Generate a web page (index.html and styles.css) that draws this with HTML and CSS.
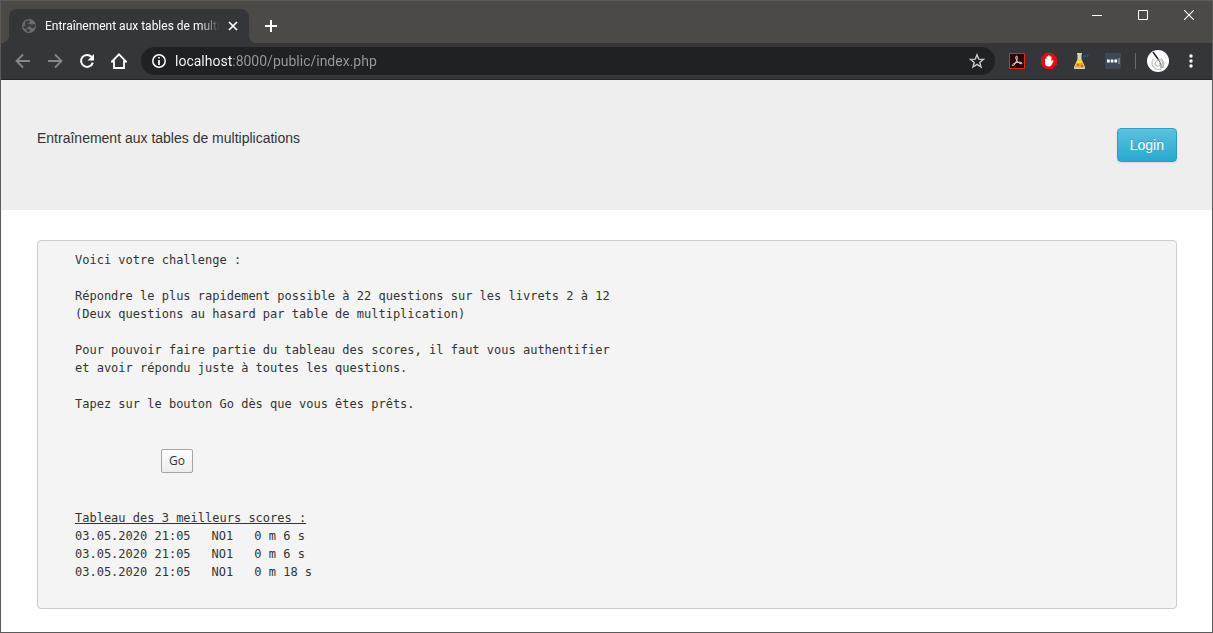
FILE: index.html
```html
<!DOCTYPE html>
<html lang="fr">
<head>
<meta charset="utf-8">
<title>Entraînement aux tables de multiplications</title>
<link rel="stylesheet" href="styles.css">
</head>
<body>
<div class="window">
  <div class="tabstrip">
    <div class="tab">
      <svg class="globe" viewBox="0 0 16 16" width="16" height="16"><circle cx="8" cy="8" r="7" fill="#6b6f73"/><path d="M4 3.500l4-1.500 1 2-2 1.500 2.500 1 4-.5 1 2-2 2.500-2-.5-1.500-1.500-2 .5-1 2-3-.5-1-2 2-1z" fill="#3b3d41"/><path d="M5 11.500l3-.5 1.500 1-1.500 2-2-.5z" fill="#3b3d41"/></svg>
      <span class="tab-title">Entraînement aux tables de multiplications</span>
      <button class="icon-button tab-close" aria-label="Fermer l'onglet"><svg viewBox="0 0 10 10" width="10" height="10"><path d="M1 1l8 8M9 1l-8 8" stroke="#fff" stroke-width="1.7"/></svg></button>
    </div>
    <button class="icon-button new-tab" aria-label="Nouvel onglet"><svg viewBox="0 0 12 12" width="12" height="12"><path d="M6 0v12M0 6h12" stroke="#fff" stroke-width="2"/></svg></button>
    <div class="window-controls">
      <button class="icon-button" aria-label="Réduire"><svg viewBox="0 0 10 10" width="10" height="10"><path d="M0 5.5h10" stroke="#fff"/></svg></button>
      <button class="icon-button" aria-label="Agrandir"><svg viewBox="0 0 10 10" width="10" height="10"><path d="M.5 .5h9v9h-9z" fill="none" stroke="#fff"/></svg></button>
      <button class="icon-button" aria-label="Fermer"><svg viewBox="0 0 10 10" width="10" height="10"><path d="M0 0l10 10M10 0L0 10" stroke="#fff" stroke-width="1.1"/></svg></button>
    </div>
  </div>
  <div class="toolbar">
    <div class="nav">
      <button class="icon-button" aria-label="Précédent"><svg viewBox="0 0 16 16" width="16" height="16"><path d="M15 8H2M8 1.5L1.500 8 8 14.500" fill="none" stroke="#85878a" stroke-width="1.800"/></svg></button>
      <button class="icon-button" aria-label="Suivant"><svg viewBox="0 0 16 16" width="16" height="16"><path d="M1 8h13M8 1.500L14.500 8 8 14.500" fill="none" stroke="#85878a" stroke-width="1.800"/></svg></button>
      <button class="icon-button" aria-label="Actualiser"><svg viewBox="0 0 16 16" width="16" height="16"><path d="M12.600 4A6 6 0 1 0 13.800 9.600" fill="none" stroke="#fff" stroke-width="2"/><path d="M15 1v6.500H8.500z" fill="#fff"/></svg></button>
      <button class="icon-button" aria-label="Accueil"><svg viewBox="0 0 16 16" width="16" height="16"><path d="M1 8.500L8 1.300l7 7.200h-2V15H3V8.500z" fill="none" stroke="#fff" stroke-width="1.800"/></svg></button>
    </div>
    <div class="omnibox">
      <svg viewBox="0 0 14 14" width="14" height="14"><circle cx="7" cy="7" r="6.200" fill="none" stroke="#fff" stroke-width="1.500"/><path d="M7 3v1.600M7 6v5" stroke="#fff" stroke-width="1.700"/></svg>
      <input class="address" type="text" aria-label="Adresse" value="localhost:8000/public/index.php">
      <button class="icon-button" aria-label="Favori"><svg viewBox="0 0 16 16" width="16" height="16"><path d="M8 1.800l1.700 4.300 4.700.3-3.600 3 1.200 4.600-4-2.600-4 2.600 1.200-4.600-3.600-3 4.700-.3z" fill="none" stroke="#c8cacc" stroke-width="1.400"/></svg></button>
    </div>
    <div class="extensions">
      <button class="icon-button" aria-label="PDF"><svg viewBox="0 0 16 16" width="16" height="16"><path d="M.5 .5h15v15H.5z" fill="#2a0808" stroke="#e22b10"/><path d="M7.200 3.200c1.500-.8 1.300 2.200.4 4.500-.8 2-2.800 5.300-4 5-1.300-.5 1.300-2.700 4.400-3.300 3-.6 5.500.2 4.900 1.100-.7.900-3-.4-4.300-1.900C7 6.900 6.200 4 7.200 3.200z" fill="none" stroke="#e9dede" stroke-width="1"/></svg></button>
      <button class="icon-button" aria-label="Bloqueur"><svg viewBox="0 0 16 16" width="16" height="16"><path d="M4.700 0h6.600L16 4.700v6.600L11.300 16H4.700L0 11.300V4.700z" fill="#e60c10"/><path d="M4 6q.7-1 1.500 0V3.800q.8-1 1.600 0V2.800q.9-1 1.700 0v1q.9-.9 1.700 0V8.500l1-1.200q1.200-.2 1 .8l-2 3.900q-.8 1.500-2.600 1.500Q4 13.500 4 10z" fill="#fff"/></svg></button>
      <button class="icon-button" aria-label="Laboratoire"><svg viewBox="0 0 16 16" width="16" height="16"><path d="M4 0h5v1.500H8.500V6l3.500 8v2H1v-2l3.500-8V1.500H4z" fill="#d6d2bd"/><path d="M5 6.500h3l3.500 8h-10z" fill="#f1a51b"/><path d="M5 6.500h3l1.500 3.500h-6z" fill="#f6dc22"/><path d="M4 11h2v2H4zM8 12h2v2H8z" fill="#c8692a"/><path d="M10 3l2-1.500 1 2-2 1.500zM13.500 1l2.500 1-2 3z" fill="#14617e"/></svg></button>
      <button class="icon-button" aria-label="Mots de passe"><svg viewBox="0 0 16 16" width="16" height="16"><rect width="16" height="16" rx="1" fill="#3b4a54"/><path d="M2 6.500h2.700v3H2zM5.700 6.500h2.700v3H5.700zM9.400 6.500h2.700v3H9.400z" fill="#fff"/><path d="M14 5v6" stroke="#a9b1b5"/></svg></button>
    </div>
    <span class="separator"></span>
    <button class="icon-button avatar" aria-label="Profil"><svg viewBox="0 0 22 22" width="22" height="22"><circle cx="11" cy="11" r="11" fill="#fff"/><path d="M6 2l5 7" stroke="#222" stroke-width="1.500"/><path d="M6 9c-2 4-1 8 3 10 3 1 7 0 7-3 0-4-2-7-5-6-3 1-4 5-1 6 3 1 4-2 2-3M14 8l3 5-1 5" fill="none" stroke="#999" stroke-width=".8"/><path d="M11 9l3 5v4" fill="none" stroke="#444" stroke-width=".8"/></svg></button>
    <button class="icon-button" aria-label="Menu"><svg viewBox="0 0 4 14" width="4" height="14"><g fill="#fff"><circle cx="2" cy="2" r="1.700"/><circle cx="2" cy="7" r="1.700"/><circle cx="2" cy="12" r="1.700"/></g></svg></button>
  </div>
  <div class="page">
    <header class="header">
      <span>Entraînement aux tables de multiplications</span>
      <button class="login">Login</button>
    </header>
    <main class="challenge">
      <p>Voici votre challenge :</p>
      <p>Répondre le plus rapidement possible à 22 questions sur les livrets 2 à 12<br>(Deux questions au hasard par table de multiplication)</p>
      <p>Pour pouvoir faire partie du tableau des scores, il faut vous authentifier<br>et avoir répondu juste à toutes les questions.</p>
      <p>Tapez sur le bouton Go dès que vous êtes prêts.</p>
      <button class="go">Go</button>
      <table class="scores">
        <caption>Tableau des 3 meilleurs scores :</caption>
        <tbody>
          <tr><td>03.05.2020 21:05</td><td>NO1</td><td>0 m 6 s</td></tr>
          <tr><td>03.05.2020 21:05</td><td>NO1</td><td>0 m 6 s</td></tr>
          <tr><td>03.05.2020 21:05</td><td>NO1</td><td>0 m 18 s</td></tr>
        </tbody>
      </table>
    </main>
  </div>
</div>
</body>
</html>
```
FILE: styles.css
```css
* { box-sizing: border-box; }
body { margin: 0; font-family: "Liberation Sans", Arial, sans-serif; color: #333; }
.window { min-height: 100vh; border: 1px solid #5a5a5a; background: #fff; }
.icon-button { display: flex; align-items: center; justify-content: center; flex: none; padding: 0; border: 0; background: none; }
svg { display: block; flex: none; }

.tabstrip { display: flex; align-items: flex-end; height: 42px; padding-left: 8px; background: #4b4a47; }
.tab { position: relative; display: flex; align-items: center; width: 240px; height: 34px; padding: 0 11px 0 12px; border-radius: 8px 8px 0 0; background: #35363a; }
.tab::before, .tab::after { content: ""; position: absolute; bottom: 0; width: 8px; height: 8px; }
.tab::before { right: 100%; background: radial-gradient(circle at 0 0, transparent 8px, #35363a 8px); }
.tab::after { left: 100%; background: radial-gradient(circle at 100% 0, transparent 8px, #35363a 8px); }
.tab-title { flex: 1; margin: 0 8px; overflow: hidden; white-space: nowrap; font: 12px/16px Roboto, "Open Sans", sans-serif; color: #fff; mask-image: linear-gradient(to right, #000 88%, transparent); }
.new-tab { width: 28px; height: 34px; margin-left: 8px; }
.window-controls { display: flex; align-self: flex-start; margin-left: auto; }
.window-controls .icon-button { width: 46px; height: 28px; }

.toolbar { display: flex; align-items: center; height: 37px; padding: 0 14px; border-bottom: 1px solid #252629; background: #35363a; }
.nav { display: flex; gap: 16px; }
.omnibox { display: flex; align-items: center; flex: 1; height: 28px; margin: 0 14px; padding: 0 10px 0 11px; border-radius: 14px; background: #202124; }
.address { flex: 1; min-width: 0; height: 28px; margin: 0 8px; padding: 0 1px; border: 0; outline: 0; background: linear-gradient(to right, #fff 58px, #999b9e 58px); background-clip: text; color: transparent; font: 14px/28px Roboto, "Open Sans", sans-serif; }
.extensions { display: flex; gap: 16px; }
.separator { width: 1px; height: 16px; margin: 0 11px 0 14px; background: #6a6b6e; }
.avatar { margin-right: 20px; }
.toolbar > .icon-button:last-child { margin-right: 5px; }

.header { display: flex; align-items: flex-start; justify-content: space-between; min-height: 130px; padding: 48px 35px 36px 36px; background: #eee; font-size: 14px; line-height: 20px; }
.login { padding: 6px 12px; border: 1px solid #2a9fc4; border-radius: 4px; background: linear-gradient(#5bc0de, #28a9d0); box-shadow: inset 0 1px 0 rgba(255, 255, 255, .1), 0 1px 2px rgba(0, 0, 0, .1); color: #fff; font: 14px/20px "Liberation Sans", Arial, sans-serif; text-shadow: 0 -1px 0 rgba(0, 0, 0, .2); }

.challenge { margin: 30px 35px 23px 36px; padding: 10px 37px 27px; border: 1px solid #ccc; border-radius: 4px; background: #f4f4f4; font: 12px/18px "DejaVu Sans Mono", monospace; }
.challenge p { margin: 0 0 18px; }
.go { display: block; margin: 36px 0 36px 86px; padding: 2px 7px; border: 1px solid #a6a6a6; border-radius: 2px; background: linear-gradient(#fefefe, #ededed); color: #333; font: 12px/18px "Open Sans", "Noto Sans", sans-serif; }
.scores { border-collapse: collapse; }
.scores caption { text-align: left; white-space: nowrap; text-decoration: underline; }
.scores td { padding: 0 21px 0 0; white-space: nowrap; }
```
